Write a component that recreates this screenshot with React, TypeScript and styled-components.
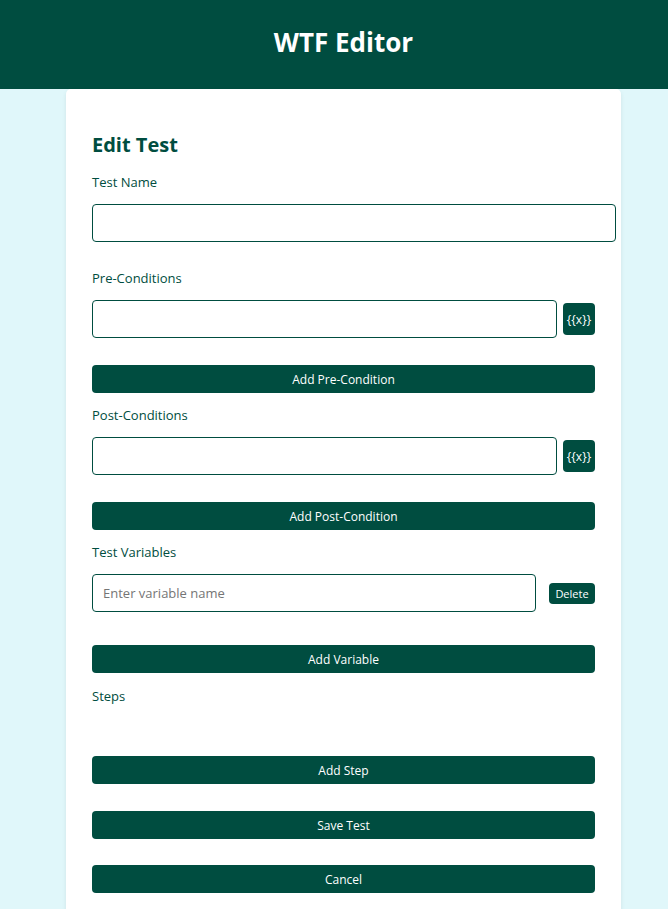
import React from "react";
import styled, { createGlobalStyle } from "styled-components";

const GREEN = "#004d40";

const Global = createGlobalStyle`
  html, body { margin: 0; padding: 0; }
  body {
    background: #e0f7fa;
    font-family: "Open Sans", "Liberation Sans", sans-serif;
    overflow: hidden;
  }
`;

const Header = styled.header`
  background: ${GREEN};
  height: 89px;
  box-sizing: border-box;
  padding: 24px 0 0 19px;
  text-align: center;
`;

const Title = styled.h1`
  margin: 0;
  color: #ffffff;
  font-size: 26px;
  font-weight: 700;
  line-height: normal;
`;

const Main = styled.main`
  padding-left: 19px;
`;

const Card = styled.section`
  max-width: 555px;
  margin: 0 auto;
  box-sizing: border-box;
  background: #ffffff;
  border-radius: 5px;
  box-shadow: 0 2px 4px rgba(0, 0, 0, 0.08);
  padding: 20px 26px 40px;
  min-height: 840px;
`;

const Heading = styled.h2`
  margin: 22px 0 12px;
  color: ${GREEN};
  font-size: 20px;
  font-weight: 700;
  line-height: normal;
`;

const Label = styled.label`
  display: block;
  color: ${GREEN};
  font-size: 13px;
  line-height: normal;
  padding-top: 3px;
  margin-bottom: 13px;
`;

const Field = styled.div<{ $after?: number }>`
  margin-bottom: ${(p) => p.$after ?? 0}px;
`;

const TextInput = styled.input`
  display: block;
  box-sizing: content-box;
  width: 100%;
  height: 36px;
  padding: 0 9px 0 10px;
  border: 1px solid ${GREEN};
  border-radius: 4px;
  font-family: "Open Sans", "Liberation Sans", sans-serif;
  font-size: 13px;
  color: #222;
  background: #fff;
  outline: none;
  &::placeholder { color: #757575; }
`;

const Row = styled.div<{ $gap: number }>`
  display: flex;
  align-items: center;
  gap: ${(p) => p.$gap}px;
`;

const RowInput = styled(TextInput)`
  box-sizing: border-box;
  flex: 1;
  width: auto;
  height: 38px;
`;

const SmallButton = styled.button<{ $h: number; $w: number; $size: number }>`
  flex: none;
  width: ${(p) => p.$w}px;
  height: ${(p) => p.$h}px;
  padding: 0;
  border: none;
  border-radius: 4px;
  background: ${GREEN};
  color: #ffffff;
  font-family: "Open Sans", "Liberation Sans", sans-serif;
  font-size: ${(p) => p.$size}px;
  cursor: pointer;
`;

const WideButton = styled.button<{ $top: number; $bottom?: number }>`
  display: block;
  width: 100%;
  height: 28px;
  margin: ${(p) => p.$top}px 0 ${(p) => p.$bottom ?? 0}px;
  padding: 0;
  border: none;
  border-radius: 4px;
  background: ${GREEN};
  color: #ffffff;
  font-family: "Open Sans", "Liberation Sans", sans-serif;
  font-size: 12px;
  cursor: pointer;
`;

const StepsList = styled.div`
  height: 54px;
  margin-top: -16px;
`;

export default function App() {
  return (
    <>
      <Global />
      <Header>
        <Title>WTF Editor</Title>
      </Header>
      <Main>
        <Card>
          <Heading>Edit Test</Heading>

          <Field $after={24}>
            <Label>Test Name</Label>
            <TextInput type="text" />
          </Field>

          <Field $after={10}>
            <Label>Pre-Conditions</Label>
            <Row $gap={6}>
              <RowInput type="text" />
              <SmallButton $w={32} $h={32} $size={12}>{"{{x}}"}</SmallButton>
            </Row>
            <WideButton $top={27}>Add Pre-Condition</WideButton>
          </Field>

          <Field $after={10}>
            <Label>Post-Conditions</Label>
            <Row $gap={6}>
              <RowInput type="text" />
              <SmallButton $w={32} $h={32} $size={12}>{"{{x}}"}</SmallButton>
            </Row>
            <WideButton $top={27}>Add Post-Condition</WideButton>
          </Field>

          <Field $after={11}>
            <Label>Test Variables</Label>
            <Row $gap={13}>
              <RowInput type="text" placeholder="Enter variable name" />
              <SmallButton $w={46} $h={21} $size={11}>Delete</SmallButton>
            </Row>
            <WideButton $top={33}>Add Variable</WideButton>
          </Field>

          <Field>
            <Label>Steps</Label>
            <StepsList />
            <WideButton $top={0}>Add Step</WideButton>
          </Field>

          <WideButton $top={27}>Save Test</WideButton>
          <WideButton $top={26}>Cancel</WideButton>
        </Card>
      </Main>
    </>
  );
}
